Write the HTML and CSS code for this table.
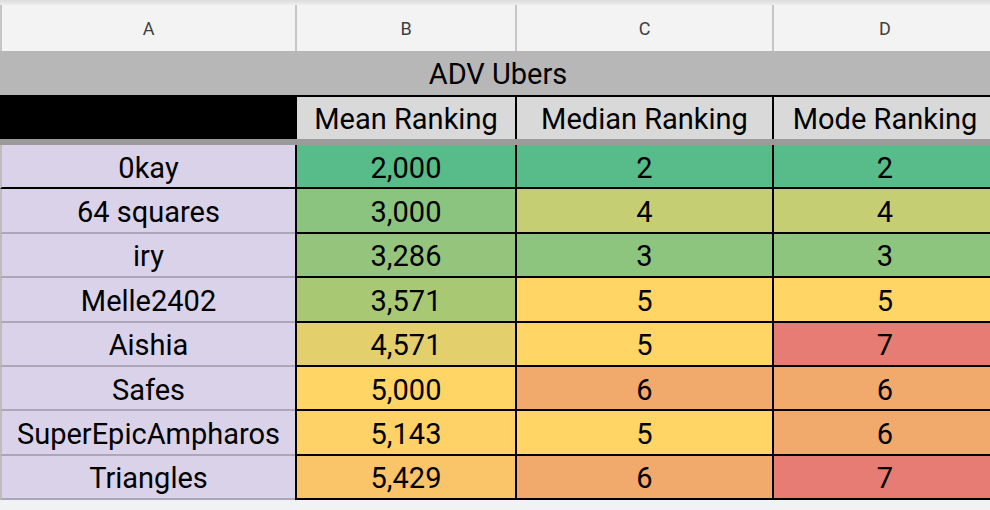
FILE: index.html
```html
<!DOCTYPE html>
<html>
<head>
<meta charset="utf-8">
<link rel="stylesheet" href="styles.css">
</head>
<body>
<div class="sheet">
  <div class="strip"></div>
  <div class="row colheads">
    <div class="ch">A</div><div class="ch">B</div><div class="ch">C</div><div class="ch">D</div>
  </div>
  <div class="title">ADV Ubers</div>
  <div class="row heads">
    <div class="hc blank"></div><div class="hc">Mean Ranking</div><div class="hc">Median Ranking</div><div class="hc">Mode Ranking</div>
  </div>
  <div class="band"></div>
  <div class="data">
    <div class="row drow first"><div class="name">0kay</div><div class="v" style="background:#57bb8a">2,000</div><div class="v" style="background:#57bb8a">2</div><div class="v" style="background:#57bb8a">2</div></div>
    <div class="row drow"><div class="name">64 squares</div><div class="v" style="background:#8bc47e">3,000</div><div class="v" style="background:#c6ce73">4</div><div class="v" style="background:#c6ce73">4</div></div>
    <div class="row drow"><div class="name">iry</div><div class="v" style="background:#95c57c">3,286</div><div class="v" style="background:#8dc47e">3</div><div class="v" style="background:#8dc47e">3</div></div>
    <div class="row drow"><div class="name">Melle2402</div><div class="v" style="background:#a9c873">3,571</div><div class="v" style="background:#ffd666">5</div><div class="v" style="background:#ffd666">5</div></div>
    <div class="row drow"><div class="name">Aishia</div><div class="v" style="background:#e3d06d">4,571</div><div class="v" style="background:#ffd666">5</div><div class="v" style="background:#e67c73">7</div></div>
    <div class="row drow"><div class="name">Safes</div><div class="v" style="background:#ffd666">5,000</div><div class="v" style="background:#f2a96c">6</div><div class="v" style="background:#f2a96c">6</div></div>
    <div class="row drow"><div class="name">SuperEpicAmpharos</div><div class="v" style="background:#fed266">5,143</div><div class="v" style="background:#ffd666">5</div><div class="v" style="background:#f2a96c">6</div></div>
    <div class="row drow"><div class="name">Triangles</div><div class="v" style="background:#f9c568">5,429</div><div class="v" style="background:#f2a96c">6</div><div class="v" style="background:#e67c73">7</div></div>
  </div>
</div>
</body>
</html>
```
FILE: styles.css
```css
* { box-sizing: border-box; }
html, body { margin: 0; padding: 0; }
body {
  background: #f1f2f4;
  overflow: hidden;
  font-family: Roboto, "Liberation Sans", sans-serif;
  color: #000;
}
.sheet { width: 996px; }
.strip {
  height: 5px;
  background: linear-gradient(#dcdcdc, #ededed);
}
.row {
  display: grid;
  grid-template-columns: 295px 220px 257px 224px;
}
.colheads {
  height: 46px;
  background: #f3f3f3;
}
.ch {
  border-left: 2px solid #c6c6c6;
  display: flex;
  align-items: center;
  justify-content: center;
  font-size: 18px;
  color: #404040;
}
.title {
  height: 44px;
  background: #b7b7b7;
  display: flex;
  align-items: center;
  justify-content: center;
  font-size: 29px;
  padding-top: 2px;
}
.heads {
  height: 44px;
  border-top: 2px solid #000;
}
.hc {
  background: #d9d9d9;
  border-left: 2px solid #000;
  display: flex;
  align-items: center;
  justify-content: center;
  font-size: 29px;
  padding-top: 2px;
}
.hc.blank { background: #000; }
.band {
  height: 6px;
  background: #9b9b9b;
}
.drow { height: 44.375px; }
.name, .v {
  display: flex;
  align-items: center;
  justify-content: center;
  font-size: 29px;
  white-space: nowrap;
  padding-top: 3px;
}
.name {
  background: #d9d2e9;
  border-left: 2px solid #bdbdbd;
  border-bottom: 2px solid #aca7b8;
}
.first .name { border-bottom-color: #000; }
.v {
  border-left: 2px solid #000;
  border-bottom: 2px solid #000;
}
```
